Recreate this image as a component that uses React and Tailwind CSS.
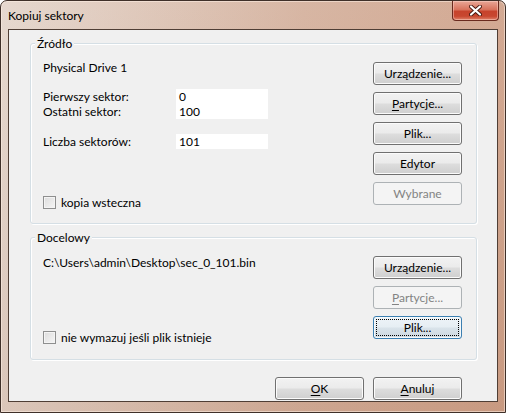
import React from "react";

const font = "font-['Segoe_UI',Lato,'Liberation_Sans',sans-serif]";

function Key({ children }) {
  return <span className="underline underline-offset-[2px]">{children}</span>;
}

function Btn({ children, disabled, focused, className = "" }) {
  let look =
    "border-[#707070] text-black bg-[linear-gradient(#f2f2f2_0%,#ebebeb_48%,#dddddd_52%,#cfcfcf_100%)] shadow-[inset_0_0_0_1px_#fbfbfb]";
  if (disabled) look = "border-[#adb2b5] text-[#838383] bg-[#f4f4f4]";
  if (focused)
    look =
      "border-[#3c7fb1] text-black bg-[linear-gradient(#eef4f8_0%,#e6eef3_48%,#d9e3ea_52%,#cdd8e0_100%)] shadow-[inset_0_0_0_1px_#f6fafc]";
  return (
    <button
      className={`relative h-[23px] w-[89px] shrink-0 rounded-[3px] border text-[12px] leading-[15px] ${look} ${className}`}
    >
      {focused && (
        <span className="absolute inset-[2px] border border-dotted border-black" />
      )}
      <span className="relative">{children}</span>
    </button>
  );
}

function Checkbox({ label }) {
  return (
    <label className="flex items-center gap-[5px] leading-[15px]">
      <span className="h-[13px] w-[13px] border border-[#8e8f8f] bg-[linear-gradient(135deg,#dcdcdc,#f6f6f6)] shadow-[inset_0_0_0_1px_#f4f4f4]" />
      <span>{label}</span>
    </label>
  );
}

function Group({ title, className = "", children }) {
  return (
    <div
      className={`relative rounded-[3px] border border-[#d5dfe5] shadow-[inset_1px_1px_0_#fff,1px_1px_0_#fff] ${className}`}
    >
      <span className="absolute -top-[8px] left-[4px] bg-[#f0f0f0] px-[2px] leading-[15px]">
        {title}
      </span>
      {children}
    </div>
  );
}

function CloseButton() {
  return (
    <div className="absolute right-[6px] top-0 flex h-[20px] w-[47px] items-center justify-center rounded-b-[4px] border border-t-0 border-[#6a2a1e] bg-[linear-gradient(#e9a797_0%,#d8735d_45%,#c7432c_55%,#c8472f_80%,#e0826a_100%)] shadow-[inset_0_0_0_1px_rgba(255,220,210,0.45)]">
      <svg width="13" height="11" viewBox="0 0 13 11">
        <path
          d="M2 1.5 L11 9.5 M11 1.5 L2 9.5"
          stroke="#4a1a12"
          strokeWidth="4"
          strokeLinecap="round"
        />
        <path
          d="M2 1.5 L11 9.5 M11 1.5 L2 9.5"
          stroke="#ffffff"
          strokeWidth="2.2"
          strokeLinecap="round"
        />
      </svg>
    </div>
  );
}

export default function App() {
  return (
    <div
      className={`${font} relative flex h-[413px] w-[506px] flex-col overflow-hidden rounded-t-[7px] border border-[#3f3029] bg-[linear-gradient(180deg,rgba(255,255,255,0.08)_0%,rgba(150,90,60,0.12)_100%),linear-gradient(90deg,#e4d5cb_0%,#dcc3b4_30%,#d4b09c_60%,#cfa28a_100%)] text-[12px] text-black shadow-[inset_0_0_0_1px_rgba(255,240,230,0.55)]`}
    >
      {/* title bar */}
      <div className="flex h-[28px] shrink-0 items-center pl-[7px] pt-[1px] text-[12px]">
        Kopiuj sektory
      </div>
      <CloseButton />

      {/* client area */}
      <div className="mx-[7px] mb-[10px] flex flex-1 flex-col border border-[#4f3e35] bg-[#f0f0f0] pl-[21px] pr-[20px] pt-[13px]">
        <Group title="Źródło" className="flex h-[181px] justify-between pl-[12px] pr-[14px]">
          <div className="flex flex-col pt-[16px]">
            <div className="leading-[15px]">Physical Drive 1</div>
            <div className="mt-[14px] flex">
              <div className="w-[133px] leading-[15px]">
                <div>Pierwszy sektor:</div>
                <div>Ostatni sektor:</div>
              </div>
              <div className="w-[92px] bg-white pl-[3px] leading-[15px]">
                <div>0</div>
                <div>100</div>
              </div>
            </div>
            <div className="mt-[15px] flex leading-[15px]">
              <div className="w-[133px]">Liczba sektorów:</div>
              <div className="w-[92px] bg-white pl-[3px]">101</div>
            </div>
            <div className="mt-[46px]">
              <Checkbox label="kopia wsteczna" />
            </div>
          </div>
          <div className="flex flex-col gap-[7px] pt-[18px]">
            <Btn>Urządzenie...</Btn>
            <Btn>
              <Key>P</Key>artycje...
            </Btn>
            <Btn>Plik...</Btn>
            <Btn>Edytor</Btn>
            <Btn disabled>Wybrane</Btn>
          </div>
        </Group>

        <Group title="Docelowy" className="mt-[13px] flex h-[123px] justify-between pl-[12px] pr-[14px]">
          <div className="flex flex-col pt-[17px]">
            <div className="leading-[15px]">C:\Users\admin\Desktop\sec_0_101.bin</div>
            <div className="mt-[60px]">
              <Checkbox label="nie wymazuj jeśli plik istnieje" />
            </div>
          </div>
          <div className="flex flex-col gap-[7px] pt-[18px]">
            <Btn>Urządzenie...</Btn>
            <Btn disabled>
              <Key>P</Key>artycje...
            </Btn>
            <Btn focused>Plik...</Btn>
          </div>
        </Group>

        <div className="mt-[17px] flex justify-end gap-[9px] pr-[15px]">
          <Btn>
            <Key>O</Key>K
          </Btn>
          <Btn>
            <Key>A</Key>nuluj
          </Btn>
        </div>
      </div>
    </div>
  );
}
